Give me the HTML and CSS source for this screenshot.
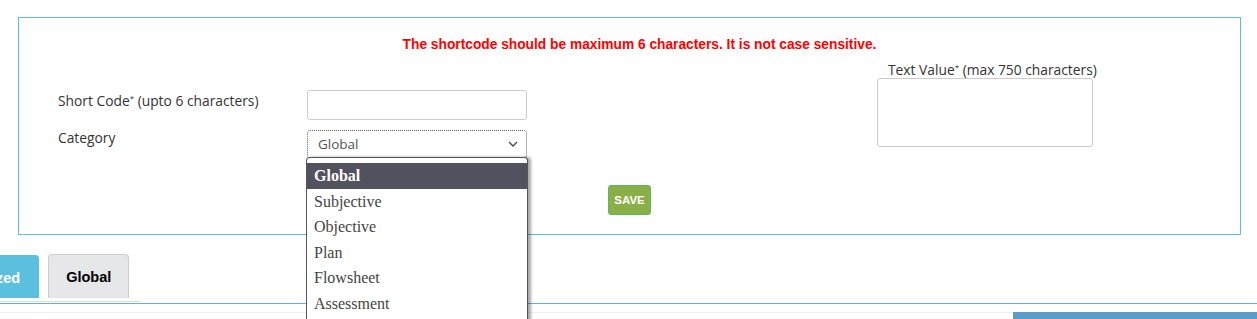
FILE: index.html
```html
<!DOCTYPE html>
<html lang="en">
<head>
    <meta charset="UTF-8">
    <title>Short Codes</title>
    <link rel="stylesheet" href="styles.css">
</head>
<body>
    <div class="panel">
        <p class="notice">The shortcode should be maximum 6 characters. It is not case sensitive.</p>
        <div class="fields">
            <div class="left-fields">
                <label class="lbl">Short Code<sup>*</sup> (upto 6 characters)</label>
                <input type="text" class="txt">
                <label class="lbl">Category</label>
                <div class="select-wrap">
                    <div class="select">
                        <span>Global</span>
                        <svg class="chev" width="10" height="6" viewBox="0 0 10 6"><path d="M1 1l4 4 4-4" fill="none" stroke="#444" stroke-width="1.3"/></svg>
                    </div>
                    <ul class="options">
                        <li class="active">Global</li>
                        <li>Subjective</li>
                        <li>Objective</li>
                        <li>Plan</li>
                        <li>Flowsheet</li>
                        <li>Assessment</li>
                    </ul>
                </div>
            </div>
            <div class="right-fields">
                <label class="lbl">Text Value<sup>*</sup> (max 750 characters)</label>
                <textarea class="area"></textarea>
            </div>
        </div>
        <div class="actions">
            <button class="save">SAVE</button>
        </div>
    </div>

    <div class="tabs">
        <div class="tab tab-on">Customized</div>
        <div class="tab">Global</div>
    </div>
    <div class="bottom">
        <div class="bottom-fill"></div>
        <div class="bottom-bar"></div>
    </div>
</body>
</html>
```

FILE: styles.css
```css
body {
    margin: 0;
    font-family: "Open Sans", "Liberation Sans", sans-serif;
    background-color: #fff;
    overflow: hidden;
    color: #333;
}
.panel {
    position: relative;
    margin: 17px 16px 0 18px;
    height: 216px;
    border: 1px solid #5bc0de;
    box-sizing: content-box;
    z-index: 2;
}
.notice {
    margin: 19px 0 0 0;
    padding-left: 20px;
    text-align: center;
    color: #f00;
    font-family: "Liberation Sans", sans-serif;
    font-weight: bold;
    font-size: 13.75px;
    line-height: 16px;
}
.fields {
    display: flex;
    margin-top: 6px;
}
.left-fields {
    display: grid;
    grid-template-columns: 249px 220px;
    row-gap: 10px;
    padding-left: 39px;
    margin-top: 31px;
}
.lbl {
    font-size: 13.8px;
    line-height: 16px;
}
.lbl sup {
    font-size: 8px;
    vertical-align: 5px;
}
.txt {
    width: 220px;
    height: 30px;
    box-sizing: border-box;
    border: 1px solid #ccc;
    border-radius: 3px;
    margin: 0;
}
.select-wrap {
    position: relative;
}
.select {
    display: flex;
    align-items: center;
    justify-content: space-between;
    height: 28px;
    box-sizing: border-box;
    border: 1px dotted #666;
    border-radius: 3px;
    padding: 0 8px 0 10px;
    font-size: 13.5px;
    color: #555;
}
.options {
    position: absolute;
    left: -1px;
    top: 27px;
    width: 220px;
    margin: 0;
    padding: 5px 0 0 0;
    list-style: none;
    background: #fff;
    border: 1px solid #555;
    border-bottom: none;
    border-radius: 4px 4px 0 0;
    box-shadow: 3px 0 3px rgba(0, 0, 0, 0.35);
    height: 170px;
    overflow: hidden;
}
.options li {
    font-family: "Liberation Serif", serif;
    font-size: 16px;
    height: 25.6px;
    line-height: 25.6px;
    padding-left: 7px;
    color: #444;
}
.options li.active {
    background-color: #52525e;
    color: #fff;
    font-weight: bold;
}
.right-fields {
    display: flex;
    flex-direction: column;
    margin-left: 350px;
}
.right-fields .lbl {
    padding-left: 11px;
}
.area {
    width: 216px;
    height: 69px;
    box-sizing: border-box;
    border: 1px solid #ccc;
    border-radius: 3px;
    margin: 0;
    resize: none;
}
.actions {
    text-align: center;
    margin-top: 27px;
}
.save {
    width: 43px;
    height: 30px;
    padding: 0;
    background-color: #8aaf47;
    border: 1px solid #5cb85c;
    border-radius: 3px;
    color: #fff;
    font-family: "Liberation Sans", sans-serif;
    font-weight: bold;
    font-size: 11.5px;
}
.tabs {
    display: flex;
    align-items: flex-end;
    margin-top: 19px;
    margin-left: -81px;
    width: 222px;
    padding-bottom: 3px;
    border-bottom: 1px solid #ddd;
}
.tab {
    height: 44px;
    line-height: 44px;
    box-sizing: border-box;
    padding: 0 17px;
    border: 1px solid #ccc;
    border-bottom: none;
    border-radius: 4px 4px 0 0;
    background-color: #e6e7e8;
    font-family: "Liberation Sans", sans-serif;
    font-weight: bold;
    font-size: 14.5px;
    color: #000;
    margin-right: 9px;
}
.tab-on {
    height: 43px;
    padding: 0 18px;
    background-color: #5bc0de;
    border-color: #5bc0de;
    color: #fff;
}
.bottom {
    display: flex;
    align-items: flex-end;
    height: 15px;
    border-top: 1px solid #5fb2d2;
    margin-top: 1px;
}
.bottom-fill {
    flex: 1;
    height: 6px;
    border-top: 1px solid #eee;
}
.bottom-bar {
    width: 244px;
    height: 7px;
    background-color: #5a9dc8;
}
```
